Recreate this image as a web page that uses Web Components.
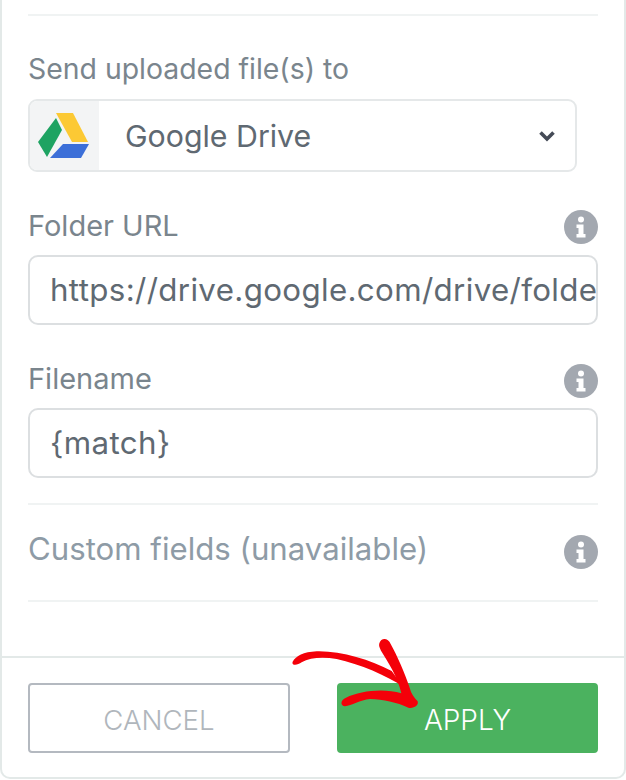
<!DOCTYPE html>
<html>
<head>
<meta charset="utf-8">
<style>
html, body { margin: 0; padding: 0; background: #fff; }
body { font-family: Inter, "Liberation Sans", sans-serif; width: 626px; height: 780px; overflow: hidden; }
</style>
</head>
<body>
<settings-panel>
  <form-divider></form-divider>
  <form-field label="Send uploaded file(s) to" style="margin-top:35px;--label-size:28.4px;--gap:14px">
    <drive-select value="Google Drive"></drive-select>
  </form-field>
  <form-field label="Folder URL" info style="margin-top:36px;--gap:13px;--info-shift:2px">
    <text-box value="https://drive.google.com/drive/folde"></text-box>
  </form-field>
  <form-field label="Filename" info style="margin-top:36px;--gap:13px;--info-shift:3px">
    <text-box value="{match}"></text-box>
  </form-field>
  <form-divider style="margin-top:25px"></form-divider>
  <form-field label="Custom fields (unavailable)" info muted style="margin-top:27px;--label-size:31.2px;--info-shift:3px"></form-field>
  <form-divider style="margin-top:34px"></form-divider>
  <action-button slot="footer">CANCEL</action-button>
  <action-button slot="footer" primary>APPLY</action-button>
</settings-panel>

<script>
(function () {
  class SettingsPanel extends HTMLElement {
    constructor() {
      super();
      this.attachShadow({mode: "open"});
      this.shadowRoot.innerHTML = `
<style>
:host { display: block; position: relative; width: 626px; height: 780px; box-sizing: border-box; }
#panel {
  box-sizing: border-box;
  width: 626px;
  height: 779px;
  border: solid #e3e9e8;
  border-width: 0 2px 2px 2px;
  border-radius: 0 0 10px 10px;
  display: flex;
  flex-direction: column;
}
#body { flex: 1; padding: 14px 26px 0 26px; width: 570px; }
#footer {
  border-top: 2px solid #e3e9e8;
  height: 121px;
  box-sizing: border-box;
  padding: 25px 26px 0 26px;
  width: 622px;
  display: flex;
  gap: 47px;
}
/* hand drawn arrow, sits over the footer */
svg { position: absolute; left: 260px; top: 630px; }
</style>
<div id="panel">
  <div id="body"><slot></slot></div>
  <div id="footer"><slot name="footer"></slot></div>
</div>
<svg width="170" height="90" viewBox="0 0 510 270">
  <path d="M98 95 C108 78 130 66 170 64 C240 62 330 88 395 123 L430 170 C380 137 300 102 230 87 C190 80 150 82 125 97 C112 107 93 107 98 95 Z" fill="#f40009"/>
  <path d="M358 40 C363 22 384 22 392 42 C412 78 434 128 449 173 C454 193 464 203 473 214 C477 228 460 236 445 233 C410 217 370 208 330 207 C300 210 275 227 255 229 C240 227 241 210 258 203 C300 183 370 174 424 190 C414 140 381 92 363 62 C358 52 356 47 358 40 Z" fill="#f40009"/>
</svg>`;
    }
  }

  class FormDivider extends HTMLElement {
    constructor() {
      super();
      this.attachShadow({mode: "open"});
      this.shadowRoot.innerHTML = `
<style>:host { display: block; height: 2px; background: #f0f3f3; }</style>`;
    }
  }

  class FormField extends HTMLElement {
    constructor() {
      super();
      this.attachShadow({mode: "open"});
      const info = this.hasAttribute("info") ? `
<svg width="34" height="34" viewBox="0 0 34 34">
  <circle cx="17" cy="17" r="17" fill="#a3a8b0"/>
  <circle cx="17" cy="9.5" r="3" fill="#fff"/>
  <path d="M12.5 14.5h7v9.5h2v3.5h-9V24h2v-6h-2z" fill="#fff"/>
</svg>` : "";
      this.shadowRoot.innerHTML = `
<style>
:host { display: block; }
#head { display: flex; justify-content: space-between; align-items: center; height: 34px; }
#head svg { transform: translateY(var(--info-shift, 0)); }
#label { font-size: var(--label-size, 29px); color: ${this.hasAttribute("muted") ? "#8e9ba6" : "#7a858d"}; white-space: nowrap; }
#content { margin-top: var(--gap, 12px); }
</style>
<div id="head"><span id="label"></span>${info}</div>
<div id="content"><slot></slot></div>`;
      this.shadowRoot.getElementById("label").textContent = this.getAttribute("label");
      if (!this.children.length) this.shadowRoot.getElementById("content").style.display = "none";
    }
  }

  class DriveSelect extends HTMLElement {
    constructor() {
      super();
      this.attachShadow({mode: "open"});
      this.shadowRoot.innerHTML = `
<style>
:host { display: flex; box-sizing: border-box; width: 549px; height: 73px; border: 2px solid #e5e8e9; border-radius: 9px; overflow: hidden; align-items: center; }
#logo { width: 69px; height: 100%; background: #f3f4f5; display: flex; align-items: center; justify-content: center; flex: none; }
#logo svg { transform: translateX(-1px); }
#value { flex: 1; margin-left: 26px; font-size: 30.3px; color: #5f6972; }
#chev { margin-right: 19px; display: block; }
</style>
<div id="logo">
  <svg width="51" height="45" viewBox="0 0 51 45">
    <path d="M18 0H35L50 29H34Z" fill="#fcc934"/>
    <path d="M18 5L24 17L9 44L0 29Z" fill="#1ea362"/>
    <path d="M25 31H51L43 45H12Z" fill="#3c6fd8"/>
  </svg>
</div>
<div id="value"></div>
<svg id="chev" width="18" height="12" viewBox="0 0 18 12"><path d="M2.5 2.5L9 9L15.5 2.5" fill="none" stroke="#454b57" stroke-width="3.6"/></svg>`;
      this.shadowRoot.getElementById("value").textContent = this.getAttribute("value");
    }
  }

  class TextBox extends HTMLElement {
    constructor() {
      super();
      this.attachShadow({mode: "open"});
      this.shadowRoot.innerHTML = `
<style>
:host { display: flex; box-sizing: border-box; width: 570px; height: 70px; border: 2px solid #dcdfe1; border-radius: 10px; overflow: hidden; align-items: center; padding-left: 20px; }
#value { font-size: 31.3px; letter-spacing: .35px; color: #5f6972; white-space: nowrap; }
</style>
<div id="value"></div>`;
      this.shadowRoot.getElementById("value").textContent = this.getAttribute("value");
    }
  }

  class ActionButton extends HTMLElement {
    constructor() {
      super();
      this.attachShadow({mode: "open"});
      this.shadowRoot.innerHTML = `
<style>
:host { display: flex; box-sizing: border-box; width: 262px; height: 70px; padding-top: 3px; align-items: center; justify-content: center; border-radius: 4px; font-size: 27.6px; font-weight: 300; border: 2px solid #b4b9c0; color: #b0b6bc; }
:host([primary]) { width: 261px; background: #4bb25f; border-color: #4bb25f; color: #fff; font-size: 28px; }
</style>
<slot></slot>`;
    }
  }

  customElements.define("settings-panel", SettingsPanel);
  customElements.define("form-divider", FormDivider);
  customElements.define("form-field", FormField);
  customElements.define("drive-select", DriveSelect);
  customElements.define("text-box", TextBox);
  customElements.define("action-button", ActionButton);
})();
</script>
</body>
</html>
